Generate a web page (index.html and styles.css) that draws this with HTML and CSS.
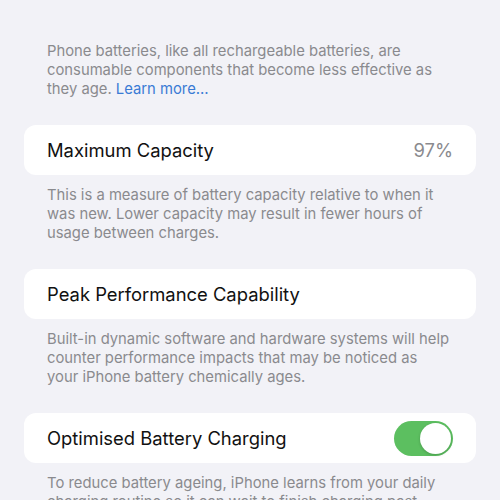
FILE: index.html
```html
<!DOCTYPE html>
<html>
<head>
<meta charset="utf-8">
<link rel="stylesheet" href="styles.css">
</head>
<body>
<div class="page">
  <p class="note first">Phone batteries, like all rechargeable batteries, are consumable components that become less effective as they age. <span class="link">Learn more…</span></p>

  <div class="card">
    <span class="label">Maximum Capacity</span>
    <span class="value">97%</span>
  </div>
  <p class="note">This is a measure of battery capacity relative to when it was new. Lower capacity may result in fewer hours of usage between charges.</p>

  <div class="card">
    <span class="label">Peak Performance Capability</span>
  </div>
  <p class="note">Built-in dynamic software and hardware systems will help counter performance impacts that may be noticed as your iPhone battery chemically ages.</p>

  <div class="card">
    <span class="label">Optimised Battery Charging</span>
    <span class="toggle"><span class="knob"></span></span>
  </div>
  <p class="note">To reduce battery ageing, iPhone learns from your daily charging routine so it can wait to finish charging past 80% until you need to use it.</p>
</div>
</body>
</html>
```

FILE: styles.css
```css
html, body {
  margin: 0;
  padding: 0;
  background: #f2f2f7;
  height: 100%;
  overflow: hidden;
}
.page {
  padding: 42px 24px 0 24px;
  font-family: Inter, "Noto Sans", sans-serif;
  display: flex;
  flex-direction: column;
}
.note {
  margin: 0 0 26px 0;
  padding: 11px 24px 0 23px;
  font-size: 14.8px;
  line-height: 19px;
  color: #8a8a8e;
}
.note.first {
  padding-top: 0;
}
.link {
  color: #3a7bd5;
}
.card {
  background: #ffffff;
  border-radius: 12px;
  height: 50px;
  padding: 0 23px;
  display: flex;
  align-items: center;
  justify-content: space-between;
}
.label {
  font-size: 18.4px;
  color: #111111;
}
.value {
  font-size: 18.4px;
  color: #8a8a8e;
}
.toggle {
  width: 59px;
  height: 35px;
  border-radius: 18px;
  background: #5cbf60;
  display: flex;
  align-items: center;
  justify-content: flex-end;
  padding: 0 2px;
  box-sizing: border-box;
}
.knob {
  width: 31px;
  height: 31px;
  border-radius: 50%;
  background: #ffffff;
  box-shadow: 0 1px 3px rgba(0,0,0,0.2);
}
```
